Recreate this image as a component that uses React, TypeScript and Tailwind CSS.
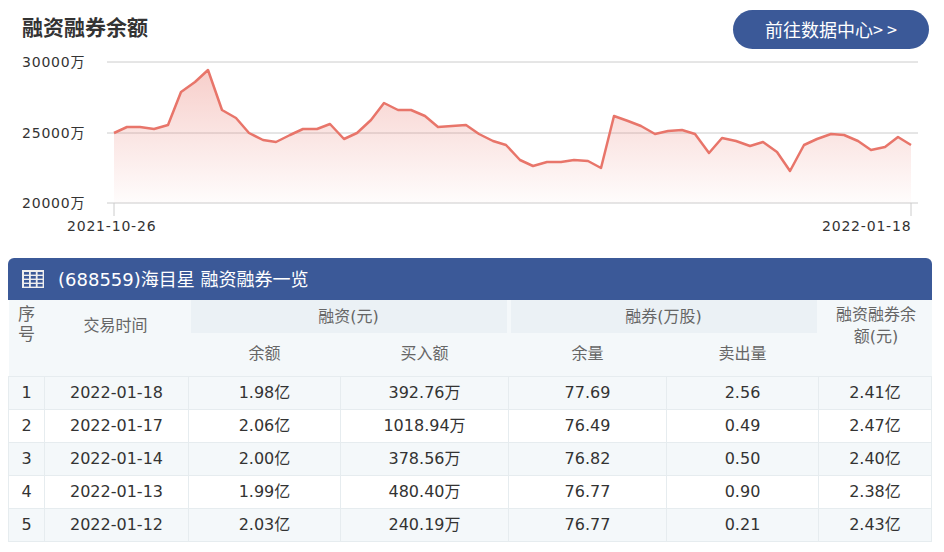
import React from "react";

const pts: [number, number][] = [[114,133],[127,127],[140,127],[154,129],[168,125],[181,92],[195,82],[208,70],[222,110],[236,118],[249,133],[263,140],[276,142],[290,135],[303,129],[317,129],[330,124],[344,139],[357,133],[371,120],[384,103],[398,110],[411,110],[425,116],[438,127],[452,126],[466,125],[479,134],[493,141],[506,145],[520,160],[533,166],[547,162],[561,162],[574,160],[588,161],[601,168],[614,116],[628,121],[641,126],[655,134],[668,131],[682,130],[695,134],[709,153],[722,138],[736,141],[750,146],[763,142],[777,152],[790,171],[804,145],[817,139],[831,134],[844,135],[858,141],[871,150],[885,147],[898,137],[911,145]];

const rows = [
  ["1","2022-01-18","1.98亿","392.76万","77.69","2.56","2.41亿"],
  ["2","2022-01-17","2.06亿","1018.94万","76.49","0.49","2.47亿"],
  ["3","2022-01-14","2.00亿","378.56万","76.82","0.50","2.40亿"],
  ["4","2022-01-13","1.99亿","480.40万","76.77","0.90","2.38亿"],
  ["5","2022-01-12","2.03亿","240.19万","76.77","0.21","2.43亿"],
];

const FONT = '"DejaVu Sans","Noto Sans CJK SC",sans-serif';

export default function App() {
  const line = pts.map((p) => p.join(",")).join(" ");
  const area = `M114,203 L${line.replace(/ /g, " L")} L911,203 Z`;
  return (
    <div className="w-[944px] h-[552px] bg-white relative overflow-hidden text-[#333]" style={{ fontFamily: FONT }}>
      <div className="h-[258px] relative">
        <div className="absolute left-[22px] top-[11px] text-[21px] font-bold text-[#333]" style={{ fontFamily: '"Noto Sans CJK SC",sans-serif' }}>融资融券余额</div>
        <div className="absolute left-[733px] top-[10px] w-[196px] h-[39px] rounded-full bg-[#3b5998] text-white text-[18px] flex items-center justify-center" style={{ fontFamily: '"Noto Sans CJK SC",sans-serif' }}>前往数据中心&gt; &gt;</div>
        <svg className="absolute left-0 top-0" width="944" height="240">
          <defs>
            <linearGradient id="g" x1="0" y1="0" x2="0" y2="1">
              <stop offset="0" stopColor="#e8756a" stopOpacity="0.35" />
              <stop offset="1" stopColor="#e8756a" stopOpacity="0.02" />
            </linearGradient>
          </defs>
          {[62, 133, 203].map((y) => (
            <line key={y} x1="107" x2="918" y1={y} y2={y} stroke="#ccc" strokeWidth="1" />
          ))}
          <line x1="114" x2="114" y1="203" y2="216" stroke="#ccc" />
          <line x1="911" x2="911" y1="203" y2="216" stroke="#ccc" />
          <path d={area} fill="url(#g)" />
          <polyline points={line} fill="none" stroke="#e8756a" strokeWidth="2.5" strokeLinejoin="round" />
          <g fontSize="14" fill="#333" style={{ fontFamily: FONT, letterSpacing: "0.8px" }}>
            <text x="22" y="67">30000万</text>
            <text x="22" y="138">25000万</text>
            <text x="22" y="208">20000万</text>
            <text x="67" y="231">2021-10-26</text>
            <text x="822" y="231">2022-01-18</text>
          </g>
        </svg>
      </div>
      <div className="mx-[8px] w-[924px]">
        <div className="h-[42px] bg-[#3b5998] rounded-t-[6px] flex items-center pl-[14px] text-white text-[18px]">
          <svg width="22" height="18" viewBox="0 0 22 18" className="mr-[14px]">
            <rect x="0" y="0" width="22" height="18" fill="#eee" />
            {[0,1,2,3].map((r) => [0,1,2].map((c) => (
              <rect key={`${r}${c}`} x={2 + c * 6.8} y={2 + r * 4} width="5" height="2.6" fill="#3b5998" />
            )))}
          </svg>
          (688559)海目星 融资融券一览
        </div>
        <table className="w-full border-collapse text-[16px] text-center">
          <colgroup>
            <col className="w-[36px]" /><col className="w-[144px]" /><col className="w-[152px]" /><col className="w-[168px]" /><col className="w-[158px]" /><col className="w-[152px]" /><col />
          </colgroup>
          <thead className="bg-[#f4f8fa] text-[#666]">
            <tr className="h-[33px]">
              <th rowSpan={2} className="font-normal align-top pt-[4px] leading-[20px] text-[17px]">序<br />号</th>
              <th rowSpan={2} className="font-normal align-top pt-[14px]">交易时间</th>
              <th colSpan={2} className="font-normal bg-[#ebf1f5] border-x-[4px] border-[#f4f8fa]">融资(元)</th>
              <th colSpan={2} className="font-normal bg-[#ebf1f5] border-x-[4px] border-[#f4f8fa]">融券(万股)</th>
              <th rowSpan={2} className="font-normal align-top pt-[4px] leading-[22px]">融资融券余<br />额(元)</th>
            </tr>
            <tr className="h-[43px]">
              <th className="font-normal">余额</th><th className="font-normal">买入额</th>
              <th className="font-normal">余量</th><th className="font-normal">卖出量</th>
            </tr>
          </thead>
          <tbody>
            {rows.map((r, i) => (
              <tr key={i} className={`h-[33px] ${i % 2 === 0 ? "bg-[#f4f8fa]" : "bg-white"}`}>
                {r.map((c, j) => (
                  <td key={j} className="border border-[#e6ecef] text-[#333] p-0">{c}</td>
                ))}
              </tr>
            ))}
          </tbody>
        </table>
      </div>
    </div>
  );
}
